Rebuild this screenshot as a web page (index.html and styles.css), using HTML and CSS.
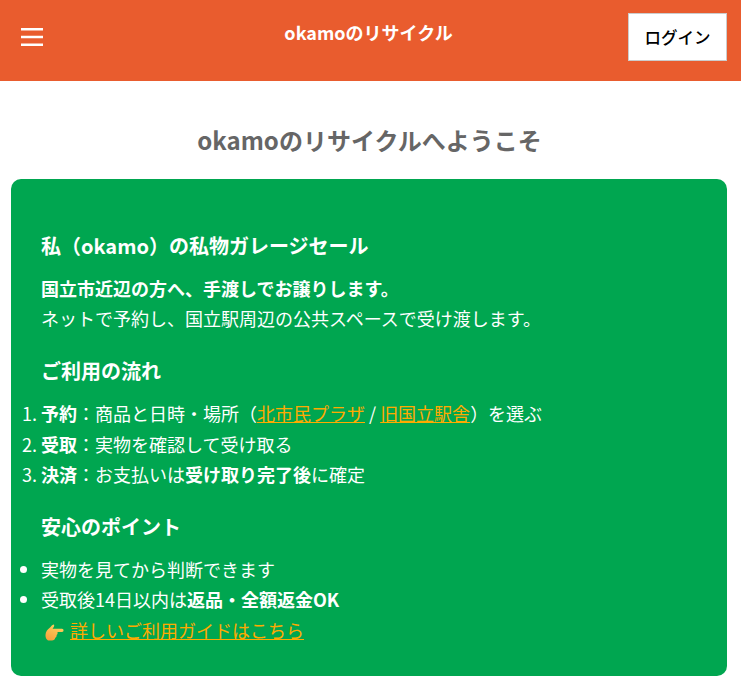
FILE: index.html
```html
<!DOCTYPE html>
<html lang="ja">
<head>
	<meta charset="utf-8">
	<title>okamoのリサイクル</title>
	<link rel="stylesheet" href="styles.css">
</head>
<body>
<div class="header">
	<button class="menu-btn" aria-label="menu">
		<svg width="24" height="20" viewBox="0 0 24 20"><path d="M1 2.3H23M1 10H23M1 17.7H23" stroke="#fff" stroke-width="2.6"/></svg>
	</button>
	<div class="brand">okamoのリサイクル</div>
	<a class="login" href="#">ログイン</a>
</div>
<h1 class="welcome">okamoのリサイクルへようこそ</h1>
<div class="panel">
	<h2>私（okamo）の私物ガレージセール</h2>
	<p class="intro"><b>国立市近辺の方へ、手渡しでお譲りします。</b><br>ネットで予約し、国立駅周辺の公共スペースで受け渡します。</p>
	<h2>ご利用の流れ</h2>
	<ol>
		<li><b>予約</b>：商品と日時・場所（<a href="#">北市民プラザ</a> / <a href="#">旧国立駅舎</a>）を選ぶ</li>
		<li><b>受取</b>：実物を確認して受け取る</li>
		<li><b>決済</b>：お支払いは<b>受け取り完了後</b>に確定</li>
	</ol>
	<h2>安心のポイント</h2>
	<ul>
		<li>実物を見てから判断できます</li>
		<li>受取後14日以内は<b>返品・全額返金OK</b></li>
	</ul>
	<p class="guide"><svg class="hand" width="19" height="17" viewBox="0 0 19 17"><defs><linearGradient id="handfill" x1="0.7" y1="0" x2="0.2" y2="1"><stop offset="0" stop-color="#ffd25e"/><stop offset="1" stop-color="#f7a03c"/></linearGradient></defs><path d="M8.7 .4C9.6 1 9.2 2.4 8.4 3.4L7.6 4.8H17C19 4.8 19 8 17 8H12.5C12.8 9.5 12.4 10.5 11.6 11C11.9 12.5 11 13.5 10.2 13.8C10 15.5 8.8 16.6 7 16.6H4.5C1.8 16.6 .4 14 .5 11C.6 7.5 2.5 5.5 4.5 4C6 2.8 7.2 .2 8.7 .4Z" fill="url(#handfill)"/></svg><a href="#">詳しいご利用ガイドはこちら</a></p>
</div>
</body>
</html>
```

FILE: styles.css
```css
body{
	margin: 0;
	background: #fff;
	font-family: "Noto Sans CJK JP", "Noto Sans", sans-serif;
	color: #fff;
}
.header{
	background: #e95c2e;
	height: 81px;
	display: grid;
	grid-template-columns: 1fr auto 1fr;
	align-items: start;
	padding: 13px 14px 0 20px;
	box-sizing: border-box;
}
.menu-btn{
	background: none;
	border: none;
	padding: 0;
	margin-top: 14px;
	line-height: 0;
	justify-self: start;
}
.brand{
	font-size: 18px;
	font-weight: 700;
	line-height: 38px;
	padding-right: 10px;
}
.login{
	background: #fff;
	color: #000;
	width: 99px;
	height: 48px;
	box-sizing: border-box;
	border: 1px solid #ccc;
	display: flex;
	align-items: center;
	justify-content: center;
	font-size: 16.5px;
	font-weight: 500;
	text-decoration: none;
	justify-self: end;
}
.welcome{
	margin: 0;
	padding: 41px 2px 21px 0;
	text-align: center;
	font-size: 24px;
	line-height: 36px;
	color: #666;
	font-weight: 700;
}
.panel{
	background: #00a650;
	border-radius: 10px;
	margin: 0 14px 12px 11px;
	padding: 50px 30px 30.6px;
	font-size: 18px;
	line-height: 30.6px;
}
h2{
	font-size: 20px;
	font-weight: 700;
	line-height: 34px;
	margin: 0 0 9.6px;
}
.intro{
	margin: 0 0 20.6px;
}
ol{
	margin: 0 0 20.2px;
	padding: 0;
}
ul{
	margin: 0;
	padding: 0;
}
.panel a{
	color: #ffaa00;
}
.guide{
	margin: 0 0 0 3px;
}
.hand{
	margin: 0 6.5px 0 .5px;
	vertical-align: -3px;
}
```
